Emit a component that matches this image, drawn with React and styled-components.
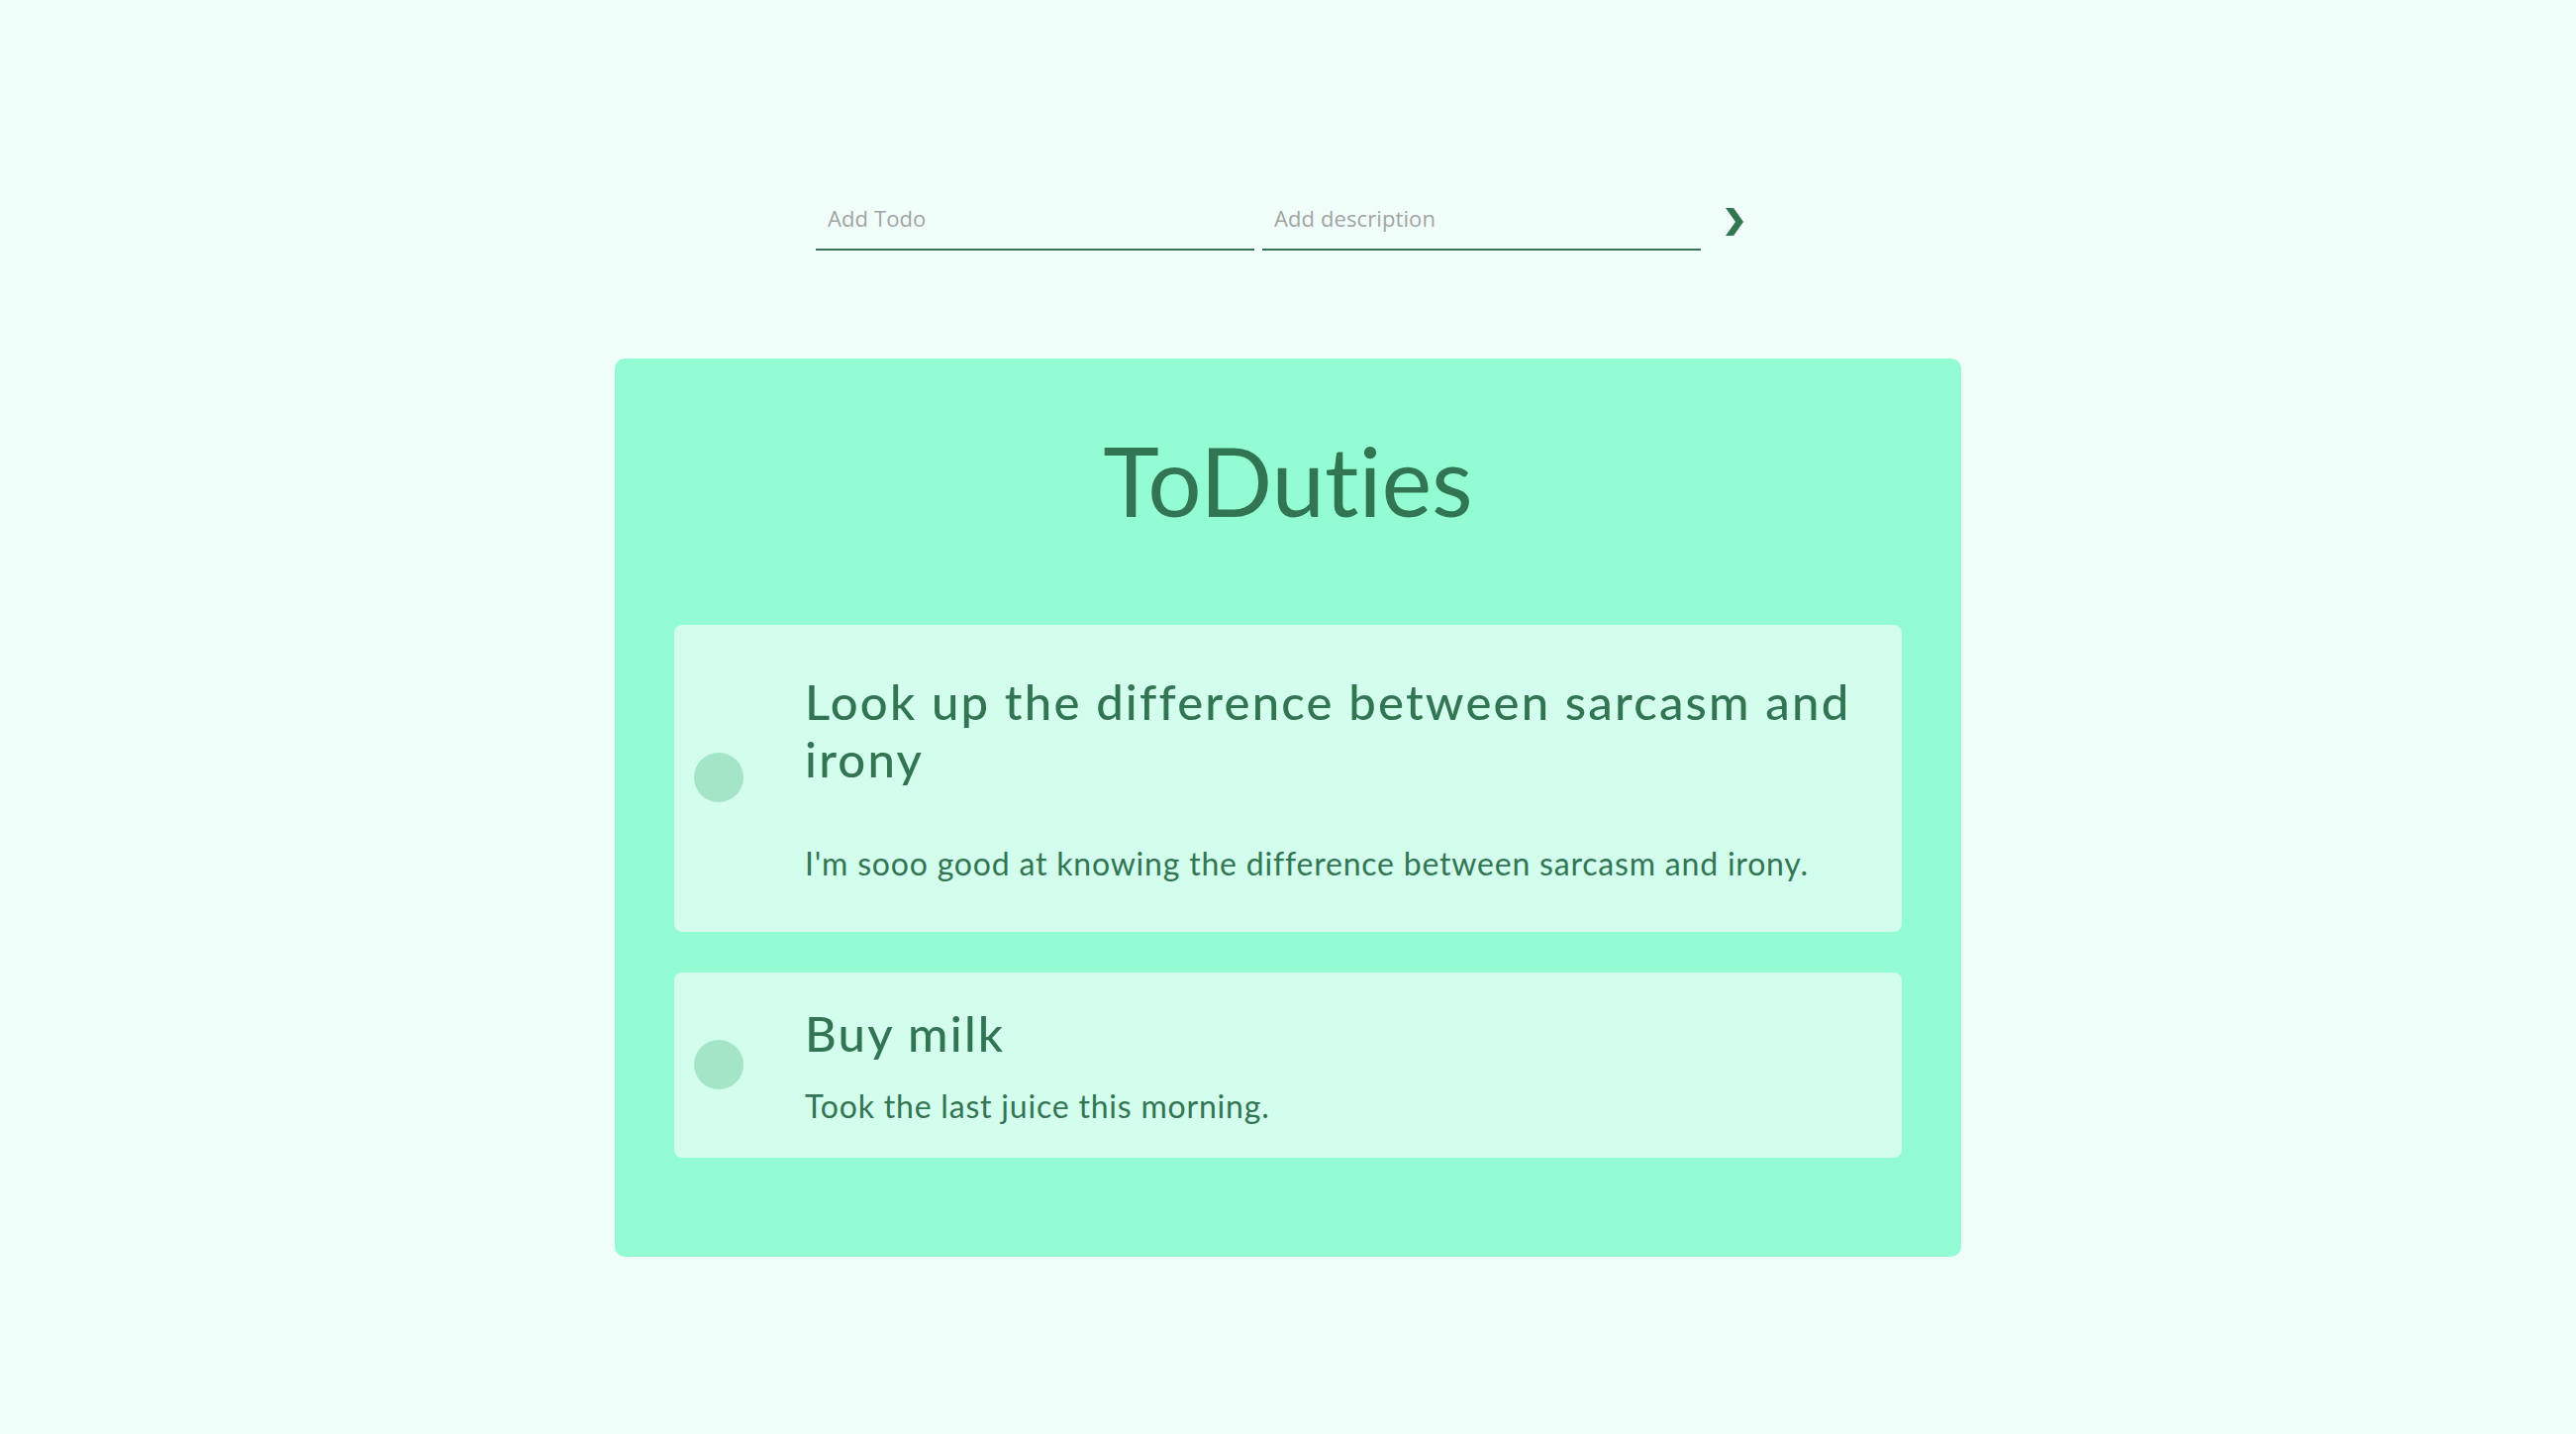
import React from "react";
import styled, { createGlobalStyle } from "styled-components";

const GlobalStyle = createGlobalStyle`
  html, body {
    margin: 0;
    padding: 0;
    background: #f0fffa;
  }
  body {
    font-family: "Lato", "Open Sans", sans-serif;
    font-variant-ligatures: none;
    color: #327553;
  }
`;

const Page = styled.div`
  min-height: 1448px;
  display: flex;
  flex-direction: column;
  align-items: center;
  padding-top: 193px;
  box-sizing: border-box;
`;

const Form = styled.form`
  display: flex;
  align-items: flex-start;
  gap: 8px;
  margin: 0 0 109px 0;
`;

const Field = styled.input`
  width: 443px;
  box-sizing: border-box;
  border: none;
  border-bottom: 2px solid #327553;
  background: transparent;
  font-family: "Open Sans", "Noto Sans", sans-serif;
  font-size: 22px;
  letter-spacing: 0.1px;
  line-height: 24px;
  height: 60px;
  padding: 15px 12px 19px;
  color: #327553;
  outline: none;
  &::placeholder {
    color: #a3a3a3;
  }
`;

const SubmitButton = styled.button`
  width: 52px;
  height: 60px;
  border: none;
  background: transparent;
  padding: 17px 0 0;
  display: flex;
  align-items: flex-start;
  justify-content: center;
  box-sizing: border-box;
  cursor: pointer;
`;

const Board = styled.section`
  width: 1360px;
  box-sizing: border-box;
  background: #94fcd2;
  border-radius: 10px;
  padding: 65px 60px 100px;
  display: flex;
  flex-direction: column;
`;

const Title = styled.h1`
  margin: 0 0 88px;
  text-align: center;
  font-size: 96px;
  line-height: 116px;
  font-weight: 400;
  color: #327553;
`;

const List = styled.ul`
  list-style: none;
  margin: 0;
  padding: 0;
  display: flex;
  flex-direction: column;
  gap: 41px;
`;

const Item = styled.li`
  display: flex;
  align-items: center;
  background: #d3fdec;
  border-radius: 8px;
  padding: ${(p) => (p.$roomy ? "48px 0 50px 20px" : "32px 0 33px 20px")};
`;

const Check = styled.span`
  flex: none;
  width: 50px;
  height: 50px;
  border-radius: 50%;
  background: #a4e5c8;
  margin-right: 62px;
`;

const Body = styled.div`
  flex: 1;
  display: flex;
  flex-direction: column;
  gap: ${(p) => (p.$roomy ? "58px" : "26px")};
`;

const ItemTitle = styled.h2`
  margin: 0;
  font-size: 49px;
  line-height: 58px;
  letter-spacing: 2.2px;
  font-weight: 500;
  color: #327553;
`;

const ItemText = styled.p`
  margin: 0;
  font-size: 32px;
  line-height: 38px;
  letter-spacing: 0.8px;
  font-weight: 400;
  color: #327553;
`;

const todos = [
  {
    title: "Look up the difference between sarcasm and irony",
    text: "I'm sooo good at knowing the difference between sarcasm and irony.",
    roomy: true,
  },
  {
    title: "Buy milk",
    text: "Took the last juice this morning.",
    roomy: false,
  },
];

export default function App() {
  return (
    <>
      <GlobalStyle />
      <Page>
        <Form onSubmit={(e) => e.preventDefault()}>
          <Field placeholder="Add Todo" />
          <Field placeholder="Add description" />
          <SubmitButton type="submit" aria-label="Add">
            <svg width="18" height="28" viewBox="0 0 18 28">
              <polygon points="0,0 8,0 18,14 8,28 0,28 10,14" fill="#327553" />
            </svg>
          </SubmitButton>
        </Form>
        <Board>
          <Title>ToDuties</Title>
          <List>
            {todos.map((t) => (
              <Item key={t.title} $roomy={t.roomy}>
                <Check />
                <Body $roomy={t.roomy}>
                  <ItemTitle>{t.title}</ItemTitle>
                  <ItemText>{t.text}</ItemText>
                </Body>
              </Item>
            ))}
          </List>
        </Board>
      </Page>
    </>
  );
}
